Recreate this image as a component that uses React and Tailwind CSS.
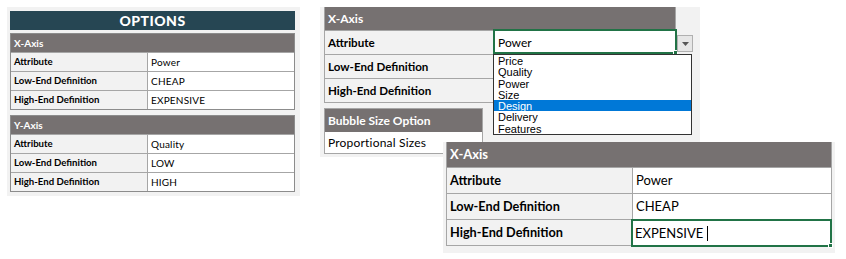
const lato = { fontFamily: "Lato, 'Open Sans', sans-serif" };

const xRows = [
  ["Attribute", "Power"],
  ["Low-End Definition", "CHEAP"],
  ["High-End Definition", "EXPENSIVE"],
];
const yRows = [
  ["Attribute", "Quality"],
  ["Low-End Definition", "LOW"],
  ["High-End Definition", "HIGH"],
];
const choices = ["Price", "Quality", "Power", "Size", "Design", "Delivery", "Features"];

// small table used in the left options block
function SmallTable({ title, rows }) {
  return (
    <div className="border border-[#8c8c8c]">
      <div className="h-[18px] bg-[#767171] text-white font-bold text-[10px] leading-[18px] pl-[3px]">
        {title}
      </div>
      {rows.map(([label, value]) => (
        <div key={label} className="flex h-[19px] border-t border-[#a6a6a6]">
          <div className="w-[137px] bg-[#f2f2f2] border-r border-[#a6a6a6] font-bold text-[9.6px] leading-[18px] pl-[3px] text-black">
            {label}
          </div>
          <div className="flex-1 bg-white text-[10px] leading-[18px] pl-[3px] text-black tracking-[0.2px]">{value}</div>
        </div>
      ))}
    </div>
  );
}

export default function App() {
  return (
    <div className="relative w-[846px] h-[259px] bg-white overflow-hidden" style={lato}>
      {/* left: options sheet */}
      <div className="absolute left-[7px] top-[7px] w-[293px] h-[189px] bg-[#f2f2f2] pl-[3px] pt-[4px] flex flex-col">
        <div className="w-[285px] h-[19px] bg-[#264653] text-white text-center font-black text-[14px] leading-[19px] tracking-[0.5px]">
          OPTIONS
        </div>
        <div className="w-[285px] mt-[3px]">
          <SmallTable title="X-Axis" rows={xRows} />
        </div>
        <div className="w-[285px] mt-[5px]">
          <SmallTable title="Y-Axis" rows={yRows} />
        </div>
      </div>

      {/* middle: dropdown in attribute cell */}
      <div className="absolute left-[320px] top-[7px] w-[380px] h-[150px] bg-[#f2f2f2] pl-[4px]">
        <div className="w-[352px] border-l border-r border-b border-[#a6a6a6]">
          <div className="h-[23px] bg-[#767171] text-white font-bold text-[12px] leading-[23px] pl-[3px]">X-Axis</div>
          {["Attribute", "Low-End Definition", "High-End Definition"].map((label, i) => (
            <div key={label} className="flex h-[24px] border-t border-[#a6a6a6]">
              <div className="w-[169px] bg-[#f2f2f2] font-bold text-[11.6px] leading-[23px] pl-[3px] text-black">{label}</div>
              <div className="flex-1 bg-white border-l border-[#a6a6a6] text-[12px] leading-[23px] pl-[3px]">
                {i === 0 ? "Power" : ""}
              </div>
            </div>
          ))}
        </div>
        <div className="w-[159px] mt-[5px] border border-[#a6a6a6]">
          <div className="h-[23px] bg-[#767171] text-white font-bold text-[12px] leading-[23px] pl-[3px]">
            Bubble Size Option
          </div>
          <div className="h-[21px] bg-white text-[12px] leading-[21px] pl-[3px] text-black tracking-[0.2px]">Proportional Sizes</div>
        </div>
      </div>

      {/* selected cell outline */}
      <div className="absolute left-[493px] top-[29px] w-[184px] h-[25px] border-2 border-[#217346] bg-white text-[12px] leading-[23px] pl-[3px] text-black">
        Power
        <div className="absolute right-[-3px] bottom-[-3px] w-[5px] h-[5px] bg-[#217346] border border-white" />
      </div>
      {/* dropdown arrow */}
      <div className="absolute left-[677px] top-[35px] w-[16px] h-[17px] bg-[#e6e6e6] border border-[#b0b0b0] flex items-center justify-center">
        <svg width="7" height="4" viewBox="0 0 7 4">
          <path d="M0 0 L7 0 L3.5 4 Z" fill="#555" />
        </svg>
      </div>
      {/* list */}
      <div
        className="absolute left-[493px] top-[54px] w-[199px] h-[81px] bg-white border border-[#333]"
        style={{ fontFamily: "'Liberation Sans', Arial, sans-serif" }}
      >
        {choices.map((c) => (
          <div
            key={c}
            className={
              c === "Design"
                ? "h-[11.3px] bg-[#0078d7] text-white text-[11px] leading-[12px] pl-[4px]"
                : "h-[11.3px] text-black text-[11px] leading-[12px] pl-[4px]"
            }
          >
            {c}
          </div>
        ))}
      </div>

      {/* right: editing cell */}
      <div className="absolute left-[443px] top-[142px] w-[392px] h-[111px] bg-[#f2f2f2] pl-[3px]">
        <div className="w-[386px] border-l border-r border-b border-[#a6a6a6]">
          <div className="h-[25px] bg-[#767171] text-white font-bold text-[13px] leading-[25px] pl-[3px]">X-Axis</div>
          {xRows.map(([label, value], i) => (
            <div key={label} className="relative flex h-[26px] border-t border-[#a6a6a6]">
              <div className="w-[185px] bg-[#f2f2f2] font-bold text-[12.7px] leading-[25px] pl-[3px] text-black">{label}</div>
              <div className="flex-1 bg-white border-l border-[#a6a6a6] text-[13px] leading-[25px] pl-[3px] text-black">
                {i === 2 ? "" : value}
              </div>
              {i === 2 && (
                <div className="absolute left-[184px] top-[-1px] w-[201px] h-[28px] border-2 border-[#217346] bg-white text-[13px] leading-[22px] pl-[2px] text-black flex items-center">
                  <span>EXPENSIVE</span>
                  <span className="ml-[4px] w-[1px] h-[15px] bg-black" />
                  <div className="absolute right-[-3px] bottom-[-3px] w-[5px] h-[5px] bg-[#217346] border border-white" />
                </div>
              )}
            </div>
          ))}
        </div>
      </div>
    </div>
  );
}
